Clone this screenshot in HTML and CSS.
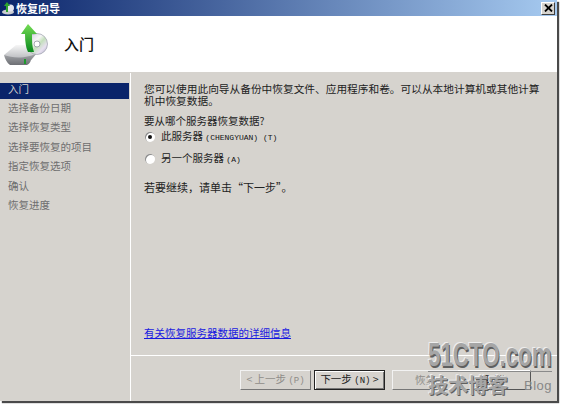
FILE: index.html
```html
<!DOCTYPE html>
<html lang="zh-CN">
<head>
<meta charset="utf-8">
<title>恢复向导</title>
<link rel="stylesheet" href="styles.css">
</head>
<body>
<div class="window">
  <div class="titlebar">
    <svg class="title-icon" viewBox="0 0 14 14" width="14" height="14">
      <ellipse cx="7" cy="11" rx="6" ry="2.500" fill="#c9ccd0"/>
      <circle cx="9.500" cy="7" r="3.500" fill="#e4e4ee"/>
      <path d="M5 11V5H3l3-4 3 4H7v6z" fill="#2fa52f"/>
    </svg>
    <span class="title-text">恢复向导</span>
    <span class="close"><svg viewBox="0 0 9 8" width="9" height="8"><path d="M1 0.500l7 7M8 0.500l-7 7" stroke="#000" stroke-width="1.800" fill="none"/></svg></span>
  </div>
  <header class="banner">
    <svg class="banner-icon" viewBox="0 0 44 42" width="44" height="42">
      <defs>
        <linearGradient id="drive" x1="0" y1="0" x2="0" y2="1"><stop offset="0" stop-color="#f6f6f6"/><stop offset="1" stop-color="#b4b6ba"/></linearGradient>
        <linearGradient id="front" x1="0" y1="0" x2="0" y2="1"><stop offset="0" stop-color="#a8aaae"/><stop offset="1" stop-color="#6d6f74"/></linearGradient>
        <linearGradient id="disc" x1="0" y1="0" x2="1" y2="1"><stop offset="0" stop-color="#c8c8dc"/><stop offset=".4" stop-color="#f5f5f5"/><stop offset=".55" stop-color="#c4e0bc"/><stop offset=".75" stop-color="#e8e0f0"/><stop offset="1" stop-color="#a8acc0"/></linearGradient>
        <linearGradient id="arrow" x1="0" y1="0" x2="0" y2="1"><stop offset="0" stop-color="#74dc54"/><stop offset="1" stop-color="#0b8a1e"/></linearGradient>
      </defs>
      <path d="M0 31L12 21H30L33 29 27 36H7z" fill="url(#drive)"/>
      <path d="M0 31c1 4 3 8 6 10h17c2-1 3-2 4-5l6-7c-8 5-23 6-33 2z" fill="url(#front)"/>
      <rect x="20" y="35" width="2" height="5" fill="#1d9a2c"/>
      <circle cx="33" cy="20" r="10.500" fill="url(#disc)" stroke="#9b9daa" stroke-width=".7"/>
      <circle cx="33" cy="20" r="3" fill="#fff" stroke="#8f93a0" stroke-width=".8"/>
      <path d="M24 28c-2-4-3-10-3-18h-4L24 0l9 10h-5c0 7 0 13 2 18z" fill="url(#arrow)"/>
    </svg>
    <h1 class="banner-title">入门</h1>
  </header>
  <div class="main">
    <nav class="nav">
      <div class="nav-item active">入门</div>
      <div class="nav-item">选择备份日期</div>
      <div class="nav-item">选择恢复类型</div>
      <div class="nav-item">选择要恢复的项目</div>
      <div class="nav-item">指定恢复选项</div>
      <div class="nav-item">确认</div>
      <div class="nav-item">恢复进度</div>
    </nav>
    <section class="panel">
      <div class="content">
        <p class="intro">您可以使用此向导从备份中恢复文件、应用程序和卷。可以从本地计算机或其他计算<br>机中恢复数据。</p>
        <p class="question">要从哪个服务器恢复数据?</p>
        <div class="option option-first"><span class="radio checked"></span><span>此服务器 <span class="small">(CHENGYUAN) (T)</span></span></div>
        <div class="option"><span class="radio"></span><span>另一个服务器 <span class="small">(A)</span></span></div>
        <p class="continue">若要继续，请单击“下一步”。</p>
        <a class="link" href="#">有关恢复服务器数据的详细信息</a>
      </div>
      <div class="footer">
        <button class="btn" disabled>&lt; 上一步 <span class="small">(P)</span></button>
        <button class="btn default">下一步 <span class="small">(N)</span> &gt;</button>
        <button class="btn restore" disabled>恢复</button>
        <button class="btn cancel">取消</button>
      </div>
    </section>
  </div>
</div>
<div class="watermark">
  <div class="wm-top"><span class="wm-logo">51CTO.com</span></div>
  <div class="wm-bottom"><span class="wm-cn">技术博客</span><span class="wm-blog">Blog</span></div>
</div>
</body>
</html>
```

FILE: styles.css
```css
html, body { margin: 0; padding: 0; background: #fff; }
body { width: 561px; height: 405px; overflow: hidden; position: relative; font-family: "Noto Sans CJK SC", "Liberation Sans", sans-serif; font-size: 11px; color: #222; }
.window { width: 557px; height: 401px; display: flex; flex-direction: column; background: #d6d3ce; box-shadow: 2px 2px 1px #4a4a4a; }
.titlebar { height: 16px; display: flex; align-items: center; background: linear-gradient(90deg, #0a246a, #a6caf0); flex: none; position: relative; }
.title-icon { margin: 0 1px 0 1px; }
.title-text { color: #fff; font-weight: 700; font-size: 11px; }
.close { margin-left: auto; margin-right: 2px; width: 14px; height: 13px; background: #d6d3ce; border: 1px solid; border-color: #fff #404040 #404040 #fff; box-sizing: border-box; display: flex; align-items: center; justify-content: center; }
.banner { height: 57px; background: #fff; border-bottom: 1px solid #d6d3ce; box-sizing: border-box; display: flex; align-items: center; flex: none; padding-left: 4px; }
.banner-icon { margin-top: 2px; }
.banner-title { margin: 0 0 0 16px; font-size: 15px; font-weight: 500; color: #111; line-height: 18px; }
.main { flex: 1; display: flex; min-height: 0; }
.nav { width: 130px; flex: none; padding-top: 10px; border-right: 1px solid #fff; color: #6e6e6e; font-size: 10.500px; }
.nav-item { height: 19.400px; line-height: 18px; padding-left: 8px; }
.nav-item.active { height: 16px; line-height: 12px; background: #0a246a; color: #d6d3ce; margin-right: 1px; }
.panel { flex: 1; display: flex; flex-direction: column; min-width: 0; }
.content { height: 283px; flex: none; box-sizing: border-box; padding: 10px 0 0 13px; border-bottom: 1px solid #fff; position: relative; display: flex; flex-direction: column; line-height: 12px; }
.intro { margin: 0; font-size: 10.700px; line-height: 12px; white-space: nowrap; }
.question { margin: 8px 0 0; font-size: 10.500px; }
.option { display: flex; align-items: center; height: 14px; margin-top: 8px; font-size: 10.500px; padding-left: 1px; }
.option-first { margin-top: 3px; }
.small { font-family: "Liberation Mono", monospace; font-size: 8px; color: #111; }
.radio { width: 10px; height: 10px; border-radius: 50%; background: #fff; box-shadow: inset 1px 1px 0 #8a8a8a; margin-right: 6px; position: relative; flex: none; }
.radio.checked::after { content: ""; position: absolute; left: 3px; top: 3px; width: 4px; height: 4px; border-radius: 50%; background: #111; }
.continue { margin: 15px 0 0; font-size: 11px; }
.link { margin-top: auto; margin-bottom: 16px; color: #1a1ae0; text-decoration: underline; font-size: 10.500px; }
.footer { flex: 1; display: flex; padding: 14px 0 0 109px; align-items: flex-start; box-sizing: border-box; }
.btn { height: 20px; width: 71px; padding: 0; background: #d6d3ce; border: 1px solid; border-color: #fff #555 #555 #fff; font: inherit; font-size: 10.500px; color: #222; line-height: 1; margin-right: 3px; white-space: nowrap; }
.btn .small { font-size: 9px; color: inherit; }
.btn:disabled { color: #8f8d89; border-color: #f2f2f2 #777 #777 #f2f2f2; }
.btn.default { outline: 1px solid #222; outline-offset: -1px; border-color: #222; box-shadow: inset 1px 1px 0 #fff, inset -1px -1px 0 #777; }
.restore { margin-left: 4px; width: 66px; margin-right: 0; border-right: 0; }
.cancel { width: 73px; margin-right: 0; border-left: 0; }
.watermark { position: absolute; left: 428px; top: 340px; width: 124px; color: #9a9a9a; font-weight: 700; pointer-events: none; }
.wm-top { height: 31px; border-bottom: 1px solid #8a8a8a; line-height: 31px; white-space: nowrap; }
.wm-logo { display: inline-block; font-family: "Liberation Sans", sans-serif; font-size: 23px; line-height: 31px; color: #a6a6a6; text-shadow: 1px 1px 0 #5f5f5f, -1px -1px 0 #eee; transform: scale(.97, 1.45); transform-origin: left center; }
.wm-bottom { display: flex; justify-content: space-between; align-items: center; margin-top: 2px; }
.wm-cn { font-family: "Noto Sans CJK SC", sans-serif; font-size: 20px; line-height: 22px; color: #a6a6a6; text-shadow: 1px 1px 0 #5f5f5f, -1px -1px 0 #eee; }
.wm-blog { font-family: "Liberation Sans", sans-serif; font-size: 13px; font-weight: 400; color: #888; letter-spacing: .5px; }
```
